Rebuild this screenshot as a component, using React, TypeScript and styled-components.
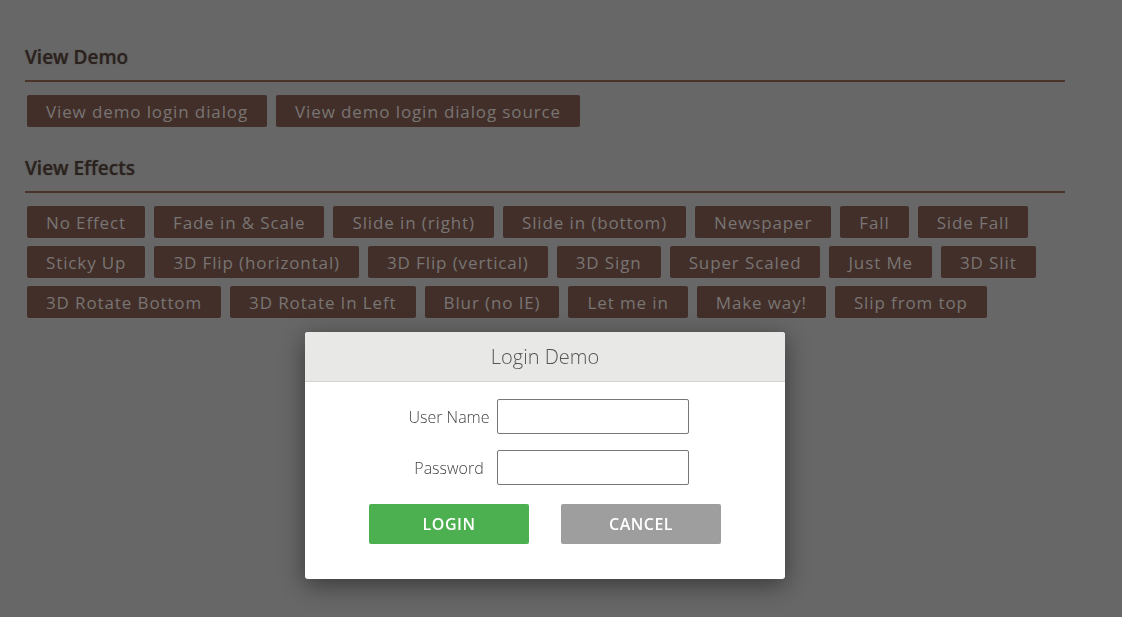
import React from 'react';
import styled, { createGlobalStyle } from 'styled-components';

const GlobalStyle = createGlobalStyle`
  html, body {
    margin: 0;
    padding: 0;
    background: #676767;
    font-family: "Open Sans", "Liberation Sans", sans-serif;
  }
`;

const demoButtons = ['View demo login dialog', 'View demo login dialog source'];

const effectButtons = [
  'No Effect', 'Fade in & Scale', 'Slide in (right)', 'Slide in (bottom)', 'Newspaper', 'Fall', 'Side Fall',
  'Sticky Up', '3D Flip (horizontal)', '3D Flip (vertical)', '3D Sign', 'Super Scaled', 'Just Me', '3D Slit',
  '3D Rotate Bottom', '3D Rotate In Left', 'Blur (no IE)', 'Let me in', 'Make way!', 'Slip from top',
];

const App: React.FC = () => {
  return (
    <>
      <GlobalStyle />
      <Page>
        <Section>
          <SectionTitle>View Demo</SectionTitle>
          <ButtonGroup>
            {demoButtons.map(label => (
              <DemoButton key={label}>{label}</DemoButton>
            ))}
          </ButtonGroup>
        </Section>
        <Section>
          <SectionTitle>View Effects</SectionTitle>
          <ButtonGroup>
            {effectButtons.map(label => (
              <DemoButton key={label}>{label}</DemoButton>
            ))}
          </ButtonGroup>
        </Section>
      </Page>

      <Dialog>
        <DialogHeader>Login Demo</DialogHeader>
        <DialogBody>
          <Form>
            <FieldLabel>User Name</FieldLabel>
            <TextInput type="text" />
            <FieldLabel>Password</FieldLabel>
            <TextInput type="password" />
          </Form>
          <Actions>
            <ActionButton $variant="primary">Login</ActionButton>
            <ActionButton $variant="secondary">Cancel</ActionButton>
          </Actions>
        </DialogBody>
      </Dialog>
    </>
  );
};

const Page = styled.div`
  width: 1040px;
  padding: 44px 25px 0;
  display: flex;
  flex-direction: column;
  gap: 28px;
`;

const Section = styled.section`
  display: flex;
  flex-direction: column;
  gap: 13px;
`;

const SectionTitle = styled.h2`
  margin: 0;
  padding-bottom: 10px;
  font-size: 19px;
  line-height: 26px;
  font-weight: 600;
  color: #2b221e;
  border-bottom: 2px solid #4a3329;
  text-shadow: 0 0 1px rgba(43, 34, 30, 0.6);
`;

const ButtonGroup = styled.div`
  display: flex;
  flex-wrap: wrap;
  gap: 8px 9px;
  padding-left: 2px;
`;

const DemoButton = styled.button`
  height: 32px;
  padding: 0 19px;
  border: none;
  border-radius: 2px;
  background: #432f29;
  color: #787574;
  font-family: "Open Sans", "Liberation Sans", sans-serif;
  font-size: 17px;
  letter-spacing: 0.88px;
  white-space: nowrap;
  cursor: pointer;
`;

const Dialog = styled.div`
  position: fixed;
  left: 305px;
  top: 332px;
  width: 480px;
  background: #fff;
  border-radius: 3px;
  overflow: hidden;
  box-shadow: 0 6px 24px rgba(0, 0, 0, 0.45);
`;

const DialogHeader = styled.div`
  height: 49px;
  display: flex;
  align-items: center;
  justify-content: center;
  background: #e8e8e7;
  border-bottom: 1px solid #d4d4d4;
  color: #555;
  font-size: 20px;
  font-weight: 300;
`;

const DialogBody = styled.div`
  padding: 17px 0 35px;
  display: flex;
  flex-direction: column;
  gap: 19px;
`;

const Form = styled.div`
  display: grid;
  grid-template-columns: 84px 192px;
  column-gap: 6px;
  row-gap: 16px;
  justify-content: center;
  align-items: center;
  padding-left: 6px;
`;

const FieldLabel = styled.label`
  text-align: center;
  color: #444;
  font-size: 16px;
  font-weight: 300;
`;

const TextInput = styled.input`
  box-sizing: border-box;
  width: 192px;
  height: 35px;
  margin: 0;
  border: 1px solid #777;
  border-radius: 2px;
  background: #fff;
  font-family: inherit;
  font-size: 15px;
  padding: 0 6px;
  outline: none;
`;

const Actions = styled.div`
  display: flex;
  justify-content: center;
  gap: 32px;
`;

const ActionButton = styled.button<{ $variant: 'primary' | 'secondary' }>`
  width: 160px;
  height: 40px;
  border: none;
  border-radius: 2px;
  background: ${p => (p.$variant === 'primary' ? '#4caf50' : '#9e9e9e')};
  color: #fff;
  font-family: "Open Sans", "Liberation Sans", sans-serif;
  font-size: 16px;
  font-weight: 600;
  letter-spacing: 0.5px;
  text-transform: uppercase;
  cursor: pointer;
`;

export default App;
